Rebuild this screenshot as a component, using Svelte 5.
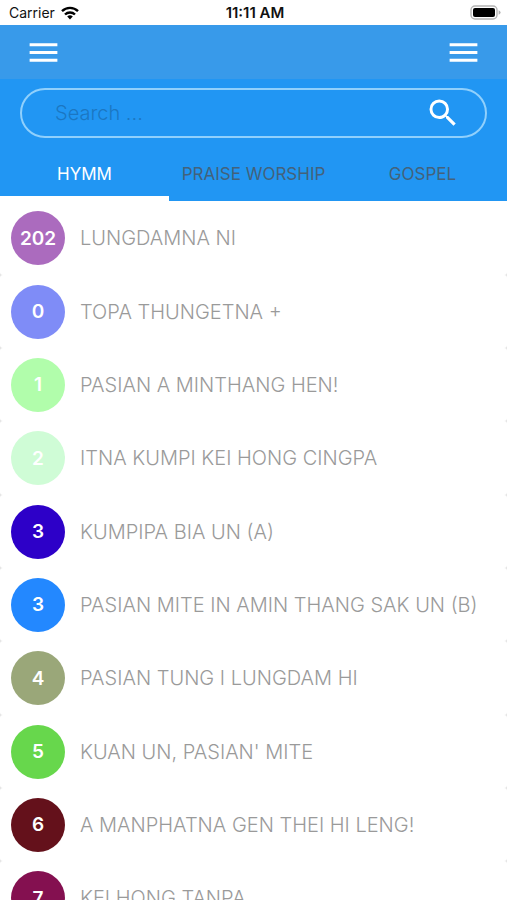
<script lang="ts">
	const tabs = ['HYMM', 'PRAISE WORSHIP', 'GOSPEL'];

	const songs = [
		{ number: 202, title: 'LUNGDAMNA NI', color: '#ab6bbe' },
		{ number: 0, title: 'TOPA THUNGETNA +', color: '#7f8cf7' },
		{ number: 1, title: 'PASIAN A MINTHANG HEN!', color: '#b1fdab' },
		{ number: 2, title: 'ITNA KUMPI KEI HONG CINGPA', color: '#cffcd6' },
		{ number: 3, title: 'KUMPIPA BIA UN (A)', color: '#2d00c8' },
		{ number: 3, title: 'PASIAN MITE IN AMIN THANG SAK UN (B)', color: '#2388ff' },
		{ number: 4, title: 'PASIAN TUNG I LUNGDAM HI', color: '#9aa779' },
		{ number: 5, title: "KUAN UN, PASIAN' MITE", color: '#67d74c' },
		{ number: 6, title: 'A MANPHATNA GEN THEI HI LENG!', color: '#64111b' },
		{ number: 7, title: 'KEI HONG TANPA', color: '#841050' }
	];

	let activeTab = $state(0);
	let query = $state('');
</script>

{#snippet menuIcon()}
	<svg width="37" height="37" viewBox="0 0 24 24" fill="currentColor" aria-hidden="true">
		<path d="M3 18h18v-2H3v2zm0-5h18v-2H3v2zm0-7v2h18V6H3z" />
	</svg>
{/snippet}

<div class="screen">
	<div class="status">
		<div class="carrier">
			<span>Carrier</span>
			<svg width="18" height="14" viewBox="0 0 18 14" aria-hidden="true">
				<g fill="none" stroke="#000" stroke-width="2.4">
					<path d="M1 5.2a11.4 11.4 0 0 1 16 0" />
					<path d="M4 8.5a7.2 7.2 0 0 1 10 0" />
				</g>
				<path d="M6.2 10.6a4 4 0 0 1 5.6 0L9 13.6z" />
			</svg>
		</div>
		<time>11:11 AM</time>
		<svg class="battery" width="31" height="15" viewBox="0 0 31 15" aria-hidden="true">
			<rect x="1" y="1" width="26" height="13" rx="4" fill="#fff" stroke="#b4b4b4" stroke-width="1.4" />
			<rect x="3" y="3" width="22" height="9" rx="2" />
			<path d="M28.6 5.2q2 .8 2 2.3t-2 2.3z" fill="#b4b4b4" />
		</svg>
	</div>

	<header>
		<button type="button" aria-label="Menu">{@render menuIcon()}</button>
		<button type="button" aria-label="Options">{@render menuIcon()}</button>
	</header>

	<div class="top">
		<form class="search" onsubmit={(e) => e.preventDefault()}>
			<input type="text" placeholder="Search ..." aria-label="Search" bind:value={query} />
			<button type="submit" aria-label="Submit search">
				<svg width="36" height="36" viewBox="0 0 24 24" fill="currentColor" aria-hidden="true">
					<path
						d="M15.5 14h-.79l-.28-.27A6.47 6.47 0 0 0 16 9.5 6.5 6.5 0 1 0 9.5 16c1.61 0 3.09-.59 4.23-1.57l.27.28v.79l5 4.99L20.49 19l-4.99-5zm-6 0C7.01 14 5 11.99 5 9.5S7.01 5 9.5 5 14 7.01 14 9.5 11.99 14 9.5 14z"
					/>
				</svg>
			</button>
		</form>

		<div class="tabs" role="tablist">
			{#each tabs as tab, i}
				<button
					type="button"
					role="tab"
					aria-selected={activeTab === i}
					class:active={activeTab === i}
					onclick={() => (activeTab = i)}
				>
					{tab}
				</button>
			{/each}
		</div>
	</div>

	<ul>
		{#each songs as song}
			<li>
				<span class="number" style="background: {song.color}">{song.number}</span>
				<span class="title">{song.title}</span>
			</li>
		{/each}
	</ul>
</div>

<style>
	:global(body) {
		margin: 0;
	}

	.screen {
		display: flex;
		flex-direction: column;
		height: 100vh;
		background: #fff;
		font-family: Inter, 'Liberation Sans', sans-serif;
	}

	button {
		padding: 0;
		border: none;
		background: transparent;
		color: #fff;
		font-family: inherit;
		cursor: pointer;
	}

	svg {
		display: block;
	}

	.status {
		display: grid;
		grid-template-columns: 1fr auto 1fr;
		align-items: center;
		height: 25px;
		padding: 0 6px 0 9px;
		box-sizing: border-box;
		flex-shrink: 0;
		font-size: 14px;
		color: #111;
	}

	.carrier {
		display: flex;
		align-items: center;
		gap: 6px;
	}

	time {
		font-size: 15px;
		font-weight: 600;
	}

	.battery {
		justify-self: end;
	}

	header {
		display: flex;
		justify-content: space-between;
		align-items: center;
		height: 54px;
		padding: 0 25px;
		flex-shrink: 0;
		background: #389aea;
	}

	.top {
		flex-shrink: 0;
		padding-top: 9px;
		background: #2196f3;
	}

	.search {
		display: flex;
		align-items: center;
		height: 50px;
		margin: 0 20px;
		padding: 0 24px 0 33px;
		box-sizing: border-box;
		border: 2px solid #90d0fc;
		border-radius: 25px;
	}

	input {
		flex: 1;
		min-width: 0;
		padding: 0;
		border: none;
		outline: none;
		background: transparent;
		color: #fff;
		font-family: inherit;
		font-size: 20px;
		font-weight: 300;
	}

	input::placeholder {
		color: #1b76c2;
		opacity: 1;
	}

	.tabs {
		display: grid;
		grid-template-columns: repeat(3, 1fr);
		height: 63px;
	}

	.tabs button {
		padding-top: 14px;
		border-bottom: 5px solid transparent;
		color: #43627b;
		font-size: 17px;
		white-space: nowrap;
	}

	.tabs button.active {
		border-bottom-color: #fff;
		color: #fff;
	}

	ul {
		flex: 1;
		min-height: 0;
		margin: 0;
		padding: 0;
		overflow-y: auto;
		scrollbar-width: none;
		list-style: none;
		background: #e4e4e4;
	}

	li {
		display: flex;
		align-items: center;
		gap: 15px;
		height: 73px;
		padding: 0 11px;
		border-radius: 3px;
		background: #fff;
	}

	li:nth-child(3n + 1) {
		height: 74px;
	}

	/* keeps the list flush with the tab underline */
	li:first-child {
		border-top-left-radius: 0;
		border-top-right-radius: 0;
	}

	.number {
		display: flex;
		align-items: center;
		justify-content: center;
		width: 54px;
		height: 54px;
		flex-shrink: 0;
		border-radius: 50%;
		color: #fff;
		font-size: 19px;
		font-weight: 600;
	}

	.title {
		color: #9a9a9a;
		font-size: 20px;
		font-weight: 300;
		white-space: nowrap;
	}
</style>
